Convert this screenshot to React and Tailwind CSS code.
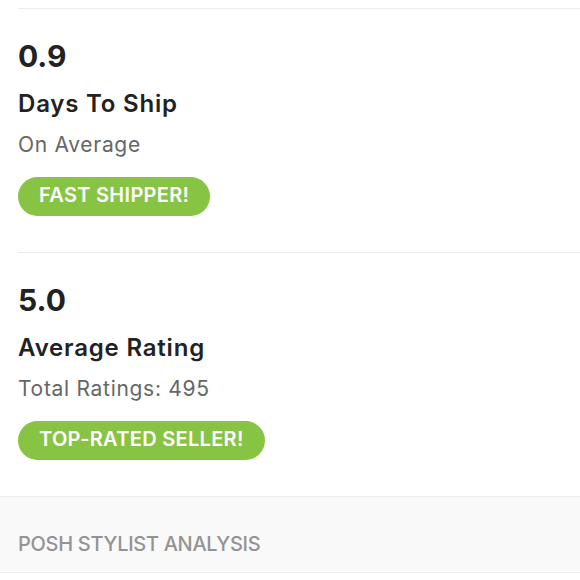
import React from "react";

const stats = [
  { value: "0.9", title: "Days To Ship", sub: "On Average", badge: "FAST SHIPPER!" },
  { value: "5.0", title: "Average Rating", sub: "Total Ratings: 495", badge: "TOP-RATED SELLER!" },
];

const App = () => {
  return (
    <div className="w-[580px] h-[580px] bg-white overflow-hidden font-['Inter','Open_Sans',sans-serif]">
      <div className="ml-[18px] pt-[8px]">
        {stats.map((s) => (
          <div key={s.value} className="border-t border-[#ececec] pt-[29px] h-[244px]">
            <p className="text-[30px] font-bold leading-[36px] text-[#222]">{s.value}</p>
            <p className="text-[24px] font-semibold leading-[30px] mt-[15px] tracking-[0.8px] text-[#222]">
              {s.title}
            </p>
            <p className="text-[21px] leading-[26px] mt-[13px] tracking-[0.7px] text-[#666]">{s.sub}</p>
            <span className="block w-fit mt-[19px] h-[39px] leading-[36px] px-[21px] rounded-full bg-[#88c443] text-white font-semibold tracking-[0.3px] text-[20px]">
              {s.badge}
            </span>
          </div>
        ))}
      </div>
      <div className="border-t border-b border-[#eeeeee] bg-[#faf9fa] h-[77px] px-[18px] pt-[34px]">
        <p className="text-[20px] font-medium leading-[26px] tracking-[-0.3px] text-[#939393]">
          POSH STYLIST ANALYSIS
        </p>
      </div>
    </div>
  );
};

export default App;
